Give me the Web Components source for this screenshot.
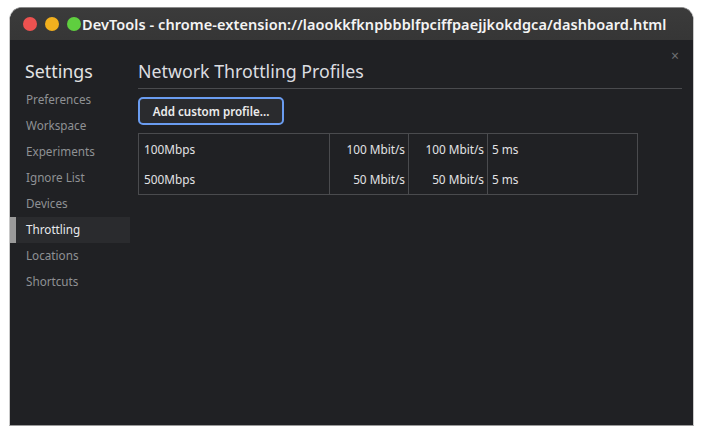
<!DOCTYPE html>
<html>
<head>
<meta charset="utf-8">
<title>DevTools</title>
<style>
  html, body { margin: 0; height: 100%; background: #fff; }
  body { padding: 7px 8px 9px 9px; box-sizing: border-box; height: 435px; overflow: hidden; font-family: "Noto Sans", sans-serif; }
</style>
</head>
<body>
<devtools-window heading="DevTools - chrome-extension://laookkfknpbbblfpciffpaejjkokdgca/dashboard.html">
  <settings-sidebar>
    <side-item>Preferences</side-item>
    <side-item>Workspace</side-item>
    <side-item>Experiments</side-item>
    <side-item>Ignore List</side-item>
    <side-item>Devices</side-item>
    <side-item selected>Throttling</side-item>
    <side-item>Locations</side-item>
    <side-item>Shortcuts</side-item>
  </settings-sidebar>
  <throttling-panel></throttling-panel>
</devtools-window>

<script>
class DevtoolsWindow extends HTMLElement {
  constructor() {
    super();
    this.attachShadow({ mode: "open" });
  }

  connectedCallback() {
    const heading = this.getAttribute("heading") || "";
    this.shadowRoot.innerHTML = `
      <style>
        :host {
          display: flex;
          flex-direction: column;
          height: 100%;
          box-sizing: border-box;
          border-radius: 13px 13px 0 0;
          overflow: hidden;
          background: #202124;
          border: 1px solid #c9c9c9;
          border-top-color: #8a8a8a;
          border-bottom-color: #9a9a9a;
        }
        .bar {
          flex: none;
          height: 32px;
          display: flex;
          align-items: center;
          padding-left: 13px;
          background: linear-gradient(#3b3b3b, #363636);
        }
        .dot { width: 14px; height: 14px; border-radius: 50%; margin-right: 8px; }
        .dot:nth-child(3) { margin-right: 1px; }
        .title {
          color: #f4f4f4;
          font-size: 14.5px;
          font-weight: 600;
          white-space: nowrap;
          letter-spacing: 0.07px;
          margin-top: -1px;
        }
        .body { flex: 1; display: flex; position: relative; }
        .close {
          position: absolute;
          top: 8px;
          right: 14px;
          color: #6e6f72;
          font-size: 14px;
          line-height: 16px;
        }
      </style>
      <div class="bar">
        <span class="dot" style="background:#ed5250"></span>
        <span class="dot" style="background:#f2b01e"></span>
        <span class="dot" style="background:#5fcf3f"></span>
        <span class="title">${heading}</span>
      </div>
      <div class="body">
        <slot></slot>
        <span class="close">×</span>
      </div>
    `;
  }
}

class SettingsSidebar extends HTMLElement {
  constructor() {
    super();
    this.attachShadow({ mode: "open" });
  }

  connectedCallback() {
    this.shadowRoot.innerHTML = `
      <style>
        :host { display: block; flex: none; width: 120px; padding-top: 20px; }
        h1 {
          margin: 0 0 5px 15px;
          font-size: 17.8px;
          line-height: 22px;
          font-weight: 400;
          color: #e3e3e3;
        }
      </style>
      <h1>Settings</h1>
      <slot></slot>
    `;
  }
}

class SideItem extends HTMLElement {
  constructor() {
    super();
    this.attachShadow({ mode: "open" });
  }

  connectedCallback() {
    this.shadowRoot.innerHTML = `
      <style>
        :host {
          display: block;
          height: 26px;
          line-height: 25px;
          box-sizing: border-box;
          padding-left: 16px;
          font-size: 11.7px;
          color: #8f9194;
        }
        :host([selected]) {
          padding-left: 10px;
          border-left: 6px solid #9a9a9a;
          background: #2a2b2e;
          color: #e8eaed;
        }
      </style>
      <slot></slot>
    `;
  }
}

class ThrottlingPanel extends HTMLElement {
  constructor() {
    super();
    this.attachShadow({ mode: "open" });
  }

  connectedCallback() {
    const rows = [
      ["100Mbps", "100 Mbit/s", "100 Mbit/s", "5 ms"],
      ["500Mbps", "50 Mbit/s", "50 Mbit/s", "5 ms"],
    ];
    this.shadowRoot.innerHTML = `
      <style>
        :host { display: block; flex: 1; padding: 20px 11px 0 8px; min-width: 0; }
        h2 {
          margin: 0;
          height: 28px;
          font-size: 17.8px;
          line-height: 22px;
          font-weight: 400;
          color: #dcdde0;
          border-bottom: 1px solid #4a4b4e;
        }
        button {
          display: block;
          margin-top: 8px;
          width: 146px;
          height: 28px;
          box-sizing: border-box;
          padding: 0;
          background: #2a2b2e;
          border: 2px solid #6a9cf0;
          border-radius: 5px;
          color: #ececec;
          font: 600 11.6px "Noto Sans", sans-serif;
        }
        .grid {
          margin-top: 8px;
          width: 500px;
          box-sizing: border-box;
          border: 1px solid #4a4b4e;
          display: grid;
          grid-template-columns: 191px 79px 79px 1fr;
          font-size: 11.8px;
          color: #e2e3e5;
        }
        .cell {
          height: 30px;
          line-height: 31px;
          padding: 0 3px 0 4px;
          white-space: nowrap;
          box-sizing: border-box;
          border-right: 1px solid #4a4b4e;
        }
        .cell.name { padding-left: 5px; }
        .cell.num { text-align: right; }
        .cell.last { border-right: 0; }
      </style>
      <h2>Network Throttling Profiles</h2>
      <button>Add custom profile...</button>
      <div class="grid">
        ${rows.map((r) => `
          <div class="cell name">${r[0]}</div>
          <div class="cell num">${r[1]}</div>
          <div class="cell num">${r[2]}</div>
          <div class="cell last">${r[3]}</div>
        `).join("")}
      </div>
    `;
  }
}

customElements.define("devtools-window", DevtoolsWindow);
customElements.define("settings-sidebar", SettingsSidebar);
customElements.define("side-item", SideItem);
customElements.define("throttling-panel", ThrottlingPanel);
</script>
</body>
</html>
